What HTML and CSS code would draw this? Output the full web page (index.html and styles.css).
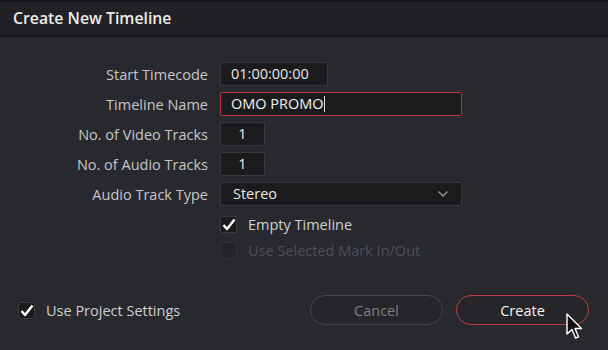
FILE: index.html
```html
<!DOCTYPE html>
<html lang="en">
<head>
    <meta charset="UTF-8">
    <title>Create New Timeline</title>
    <link rel="stylesheet" href="styles.css">
</head>
<body>
    <div class="dialog">
        <header class="titlebar">Create New Timeline</header>

        <div class="form">
            <label class="lbl">Start Timecode</label>
            <div class="field tc">01:00:00:00</div>

            <label class="lbl">Timeline Name</label>
            <div class="field name active">OMO PROMO<span class="caret"></span></div>

            <label class="lbl">No. of Video Tracks</label>
            <div class="field num">1</div>

            <label class="lbl">No. of Audio Tracks</label>
            <div class="field num">1</div>

            <label class="lbl">Audio Track Type</label>
            <div class="field select">
                <span>Stereo</span>
                <svg width="12" height="8" viewBox="0 0 12 8"><path d="M1.5 1.5 L6 6 L10.5 1.5" fill="none" stroke="#9a9a9e" stroke-width="1.3"/></svg>
            </div>

            <span></span>
            <div class="check">
                <span class="box on"><svg width="14" height="13" viewBox="0 0 14 13"><path d="M1.5 7 L5 11 L12.5 1.5" fill="none" stroke="#fff" stroke-width="2.4" stroke-linejoin="round"/></svg></span>
                Empty Timeline
            </div>

            <span></span>
            <div class="check disabled">
                <span class="box"></span>
                Use Selected Mark In/Out
            </div>
        </div>

        <footer class="foot">
            <div class="check">
                <span class="box on"><svg width="14" height="13" viewBox="0 0 14 13"><path d="M1.5 7 L5 11 L12.5 1.5" fill="none" stroke="#fff" stroke-width="2.4" stroke-linejoin="round"/></svg></span>
                Use Project Settings
            </div>
            <div class="buttons">
                <button class="btn cancel">Cancel</button>
                <button class="btn create">Create</button>
            </div>
        </footer>

        <svg class="cursor" width="20" height="28" viewBox="0 0 20 28"><path d="M1 1 L1 21 L6 16.5 L9.5 25 L12.5 23.8 L9 15.5 L15.5 15.5 Z" fill="#111" stroke="#fff" stroke-width="1.4" stroke-linejoin="round"/></svg>
    </div>
</body>
</html>
```

FILE: styles.css
```css
body {
    margin: 0;
    background: #27282d;
    font-family: "Open Sans", "Noto Sans", sans-serif;
    color: #c9c9cc;
}
.dialog {
    position: relative;
    width: 608px;
    height: 350px;
    background: #28292e;
    overflow: hidden;
}
.titlebar {
    height: 33px;
    border-top: 2px solid #141418;
    border-bottom: 2px solid #141418;
    background: #212125;
    color: #ececec;
    font-size: 15.8px;
    font-weight: 600;
    padding-left: 13px;
    line-height: 33px;
}
.form {
    display: grid;
    grid-template-columns: 208px auto;
    grid-template-rows: repeat(6, 24px) 17px;
    column-gap: 12px;
    row-gap: 6px;
    padding-top: 25px;
    align-items: center;
}
.lbl {
    text-align: right;
    font-size: 14.5px;
    color: #c6c6c9;
}
.field {
    box-sizing: border-box;
    height: 24px;
    background: #1b1b1e;
    border: 1px solid #38383d;
    border-radius: 2px;
    color: #e6e6e6;
    font-size: 14.5px;
    line-height: 22px;
    padding-left: 10px;
}
.tc { width: 108px; }
.name {
    width: 242px;
    border-color: #b8383d;
    color: #f2f2f2;
}
.caret {
    display: inline-block;
    width: 1px;
    height: 16px;
    background: #ddd;
    vertical-align: -3px;
}
.num {
    width: 45px;
    padding-left: 0;
    text-align: center;
}
.select {
    width: 242px;
    display: flex;
    justify-content: space-between;
    align-items: center;
    padding: 0 12px 0 12px;
}
.check {
    display: flex;
    align-items: center;
    gap: 11px;
    font-size: 14.5px;
    color: #cfcfd2;
}
.box {
    box-sizing: border-box;
    width: 17px;
    height: 17px;
    border: 1px solid #3a3a3f;
    background: #1b1b1e;
    border-radius: 2px;
    display: flex;
    align-items: center;
    justify-content: center;
}
.disabled { color: #4f4f55; }
.disabled .box {
    border-color: #313136;
    background: #242428;
}
.foot {
    display: flex;
    justify-content: space-between;
    align-items: center;
    padding: 0 19px 0 18px;
    margin-top: 36px;
}
.buttons {
    display: flex;
    gap: 13px;
}
.btn {
    width: 133px;
    height: 30px;
    border-radius: 15px;
    background: #25252a;
    font-family: "Open Sans", "Noto Sans", sans-serif;
    font-size: 14.5px;
}
.cancel {
    border: 1px solid #45454b;
    color: #7e7e84;
}
.create {
    border: 1.5px solid #c23b40;
    color: #f4f4f4;
}
.cursor {
    position: absolute;
    left: 566px;
    top: 313px;
}
```
